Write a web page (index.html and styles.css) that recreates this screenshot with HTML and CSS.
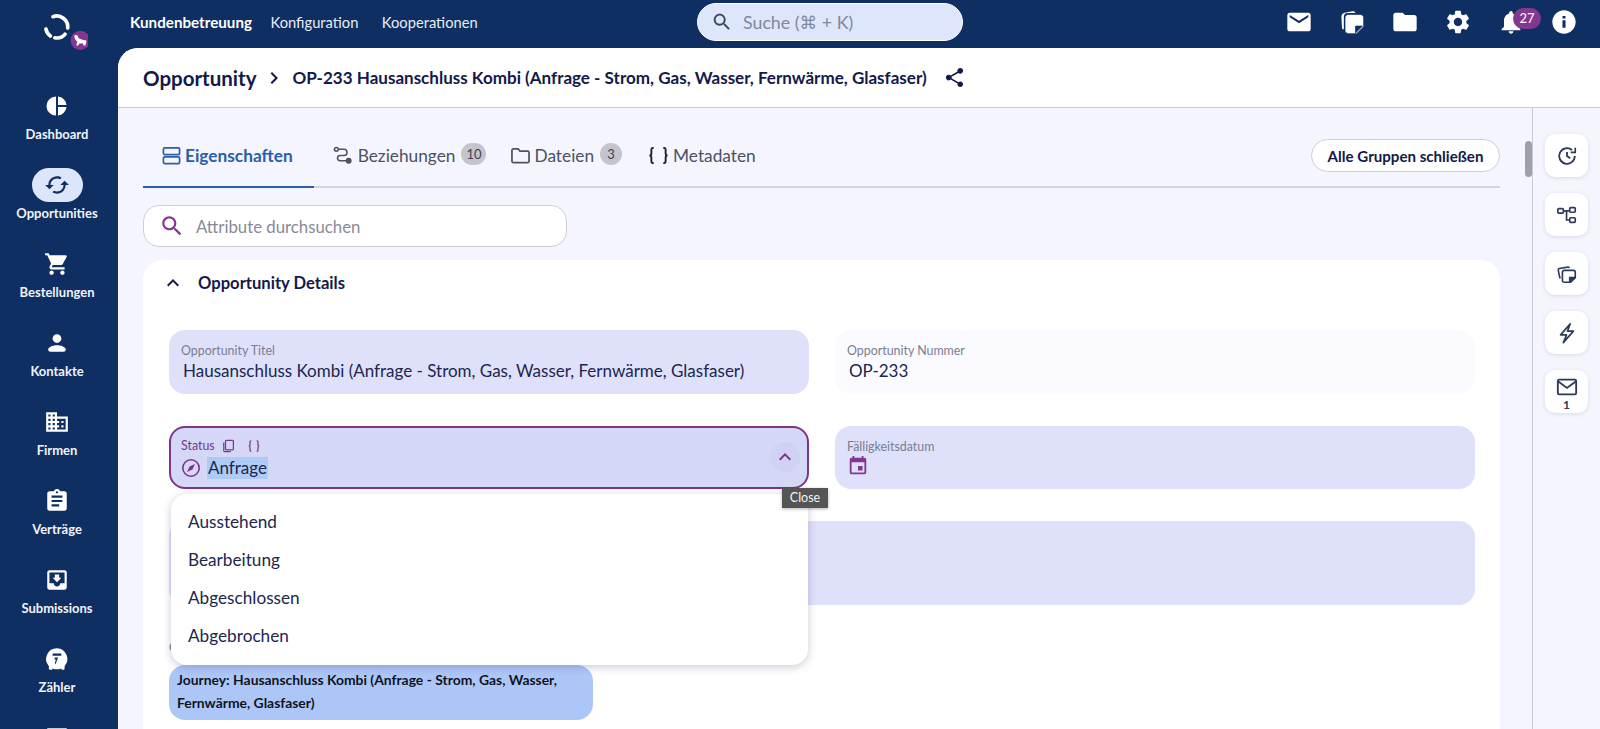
FILE: index.html
```html
<!DOCTYPE html>
<html lang="de">
<head>
  <meta charset="UTF-8" />
  <meta name="viewport" content="width=device-width, initial-scale=1.0"/>
  <title>Opportunity OP-233</title>
  <link rel="stylesheet" href="styles.css">
</head>
<body>
  <div class="app">
    <header class="topbar">
      <div class="logo-box">
        <svg class="logo" viewBox="0 0 60 50">
          <path d="M24.900 9.700A11 11 0 0 1 39.700 21" fill="none" stroke="#fff" stroke-width="3.600" stroke-linecap="round"/>
          <path d="M17.900 21.900A11 11 0 0 0 22.400 29" fill="none" stroke="#fff" stroke-width="3.600" stroke-linecap="round"/>
          <path d="M26.800 30.800A11 11 0 0 0 37.100 27.100" fill="none" stroke="#fff" stroke-width="3.600" stroke-linecap="round"/>
          <circle cx="52.300" cy="33.400" r="9.700" fill="#84378f"/>
          <path d="M46.300 28.400c2-1 4 0 4 2 1 2 5 2 8 3v2l-1 3h-2v-2h-4l-1 2h-2l1-4c-2-1-3-4-3-6z" fill="#fff"/>
        </svg>
      </div>
      <nav class="top-nav">
        <a class="top-link top-link-active">Kundenbetreuung</a>
        <a class="top-link">Konfiguration</a>
        <a class="top-link">Kooperationen</a>
      </nav>
      <div class="global-search">
        <svg class="icon-22" viewBox="0 0 24 24"><path d="M15.500 14h-.79l-.28-.27C15.410 12.590 16 11.110 16 9.500 16 5.910 13.090 3 9.500 3S3 5.910 3 9.500 5.910 16 9.500 16c1.610 0 3.090-.59 4.230-1.570l.27.28v.79l5 4.990L20.490 19l-4.990-5zm-6 0C7.010 14 5 11.990 5 9.500S7.010 5 9.500 5 14 7.010 14 9.500 11.990 14 9.500 14z"/></svg>
        <span>Suche (⌘ + K)</span>
      </div>
      <div class="top-icons">
        <svg class="top-icon" viewBox="0 0 24 24"><path d="M20 4H4c-1.100 0-2 .9-2 2v12c0 1.100.9 2 2 2h16c1.100 0 2-.9 2-2V6c0-1.100-.9-2-2-2zm0 4l-8 5-8-5V6l8 5 8-5v2z"/></svg>
        <svg class="top-icon" viewBox="0 0 24 24"><path d="M3 8.500C2.700 6 3.500 4.500 5.500 4l7-1.200c1.200-.2 2 .3 2.500 1.400H8.500C6 4.200 5 5.500 5 8v10.500c-1 0-1.500-.6-1.600-1.500z"/><path d="M9 5.500h10c1.700 0 3 1.300 3 3V16l-6 6H9c-1.700 0-3-1.300-3-3V8.500c0-1.700 1.300-3 3-3zm6 16l6-6h-6z" stroke="#0f2f63" stroke-width=".6"/></svg>
        <svg class="top-icon" viewBox="0 0 24 24"><path d="M10 4H4c-1.100 0-1.990.9-1.990 2L2 18c0 1.100.9 2 2 2h16c1.100 0 2-.9 2-2V8c0-1.100-.9-2-2-2h-8l-2-2z"/></svg>
        <svg class="top-icon" viewBox="0 0 24 24"><path d="M19.140 12.940c.04-.3.06-.61.06-.94 0-.32-.02-.64-.07-.94l2.030-1.580c.18-.14.23-.41.12-.61l-1.920-3.320c-.12-.22-.37-.29-.59-.22l-2.390.96c-.5-.38-1.030-.7-1.620-.94l-.36-2.540c-.04-.24-.24-.41-.48-.41h-3.840c-.24 0-.43.17-.47.41l-.36 2.540c-.59.24-1.130.57-1.620.94l-2.390-.96c-.22-.08-.47 0-.59.22L2.740 8.870c-.12.21-.08.47.12.61l2.030 1.580c-.05.3-.09.63-.09.94s.02.64.07.94l-2.030 1.580c-.18.14-.23.41-.12.61l1.920 3.320c.12.22.37.29.59.22l2.390-.96c.5.38 1.030.7 1.620.94l.36 2.540c.05.24.24.41.48.41h3.840c.24 0 .44-.17.47-.41l.36-2.540c.59-.24 1.130-.56 1.620-.94l2.390.96c.22.08.47 0 .59-.22l1.920-3.320c.12-.22.07-.47-.12-.61l-2.010-1.580zM12 15.600c-1.980 0-3.600-1.620-3.600-3.600s1.620-3.600 3.600-3.600 3.600 1.620 3.600 3.600-1.620 3.600-3.600 3.600z"/></svg>
        <div class="bell">
          <svg class="top-icon" viewBox="0 0 24 24"><path d="M12 22c1.100 0 2-.9 2-2h-4c0 1.100.89 2 2 2zm6-6v-5c0-3.070-1.640-5.640-4.500-6.320V4c0-.83-.67-1.500-1.500-1.500s-1.500.67-1.500 1.500v.68C7.630 5.360 6 7.920 6 11v5l-2 2v1h16v-1l-2-2z"/></svg>
          <span class="bell-badge">27</span>
        </div>
        <svg class="top-icon" viewBox="0 0 24 24"><path d="M12 2C6.480 2 2 6.480 2 12s4.480 10 10 10 10-4.480 10-10S17.520 2 12 2zm1.300 15h-2.600v-6.500h2.600V17zm0-8h-2.600V6.800h2.600V9z"/></svg>
      </div>
    </header>

    <div class="below">
      <aside class="sidebar">
        <a class="side-item">
          <span class="side-pill"><svg class="icon-24" viewBox="0 0 24 24"><path d="M11 2.500v19a9.500 9.500 0 0 1 0-19zM13 2.500a9.500 9.500 0 0 1 8.500 8.500H13zM13 13h8.500a9.500 9.500 0 0 1-8.500 8.500z"/></svg></span>
          <span class="side-label">Dashboard</span>
        </a>
        <a class="side-item side-item-active">
          <span class="side-pill"><svg class="icon-26" viewBox="0 0 24 24"><path transform="rotate(90 12 12)" d="M12 4V1L8 5l4 4V6c3.310 0 6 2.690 6 6 0 1.010-.25 1.970-.7 2.800l1.460 1.460C19.540 15.030 20 13.570 20 12c0-4.420-3.580-8-8-8zm0 14c-3.310 0-6-2.690-6-6 0-1.010.25-1.970.7-2.800L5.240 7.740C4.460 8.970 4 10.430 4 12c0 4.420 3.580 8 8 8v3l4-4-4-4v3z"/></svg></span>
          <span class="side-label">Opportunities</span>
        </a>
        <a class="side-item">
          <span class="side-pill"><svg class="icon-26" viewBox="0 0 24 24"><path d="M7 18c-1.100 0-1.990.9-1.990 2S5.900 22 7 22s2-.9 2-2-.9-2-2-2zM1 2v2h2l3.600 7.590-1.350 2.450c-.16.28-.25.61-.25.96 0 1.100.9 2 2 2h12v-2H7.420c-.14 0-.25-.11-.25-.25l.03-.12.9-1.630h7.450c.75 0 1.410-.41 1.750-1.030l3.580-6.490c.08-.14.12-.31.12-.48 0-.55-.45-1-1-1H5.210l-.94-2H1zm16 16c-1.100 0-1.990.9-1.990 2s.89 2 1.990 2 2-.9 2-2-.9-2-2-2z"/></svg></span>
          <span class="side-label">Bestellungen</span>
        </a>
        <a class="side-item">
          <span class="side-pill"><svg class="icon-24" viewBox="0 0 24 24"><path d="M12 12c2.210 0 4-1.790 4-4s-1.790-4-4-4-4 1.790-4 4 1.790 4 4 4zm0 2c-2.670 0-8 1.340-8 4c0 1 .6 2 2 2h12c1.400 0 2-1 2-2 0-2.660-5.330-4-8-4z" transform="translate(-1.200 -1.200) scale(1.100)"/></svg></span>
          <span class="side-label">Kontakte</span>
        </a>
        <a class="side-item">
          <span class="side-pill"><svg class="icon-26" viewBox="0 0 24 24"><path d="M12 7V3H2v18h20V7H12zM6 19H4v-2h2v2zm0-4H4v-2h2v2zm0-4H4V9h2v2zm0-4H4V5h2v2zm4 12H8v-2h2v2zm0-4H8v-2h2v2zm0-4H8V9h2v2zm0-4H8V5h2v2zm10 12h-8v-2h2v-2h-2v-2h2v-2h-2V9h8v10zm-2-8h-2v2h2v-2zm0 4h-2v2h2v-2z"/></svg></span>
          <span class="side-label">Firmen</span>
        </a>
        <a class="side-item">
          <span class="side-pill"><svg class="icon-26" viewBox="0 0 24 24"><path d="M19 3h-4.180C14.400 1.840 13.300 1 12 1c-1.300 0-2.400.84-2.820 2H5c-1.100 0-2 .9-2 2v14c0 1.100.9 2 2 2h14c1.100 0 2-.9 2-2V5c0-1.100-.9-2-2-2zm-7 0c.55 0 1 .45 1 1s-.45 1-1 1-1-.45-1-1 .45-1 1-1zm2 14H7v-2h7v2zm3-4H7v-2h10v2zm0-4H7V7h10v2z"/></svg></span>
          <span class="side-label">Verträge</span>
        </a>
        <a class="side-item">
          <span class="side-pill"><svg class="icon-26" viewBox="0 0 24 24"><path d="M19 3H5c-1.100 0-2 .9-2 2v14c0 1.100.9 2 2 2h14c1.100 0 2-.9 2-2V5c0-1.100-.9-2-2-2zm0 12h-4c0 1.660-1.350 3-3 3s-3-1.340-3-3H5V5h14v10zm-3-5h-2V7h-4v3H8l4 4 4-4z"/></svg></span>
          <span class="side-label">Submissions</span>
        </a>
        <a class="side-item">
          <span class="side-pill"><svg class="icon-26" viewBox="0 0 24 24"><path d="M12 2a10 10 0 0 0-7.500 16.600V21a1 1 0 0 0 1 1h1.500a1 1 0 0 0 1-1v-.3a10 10 0 0 0 8 0v.3a1 1 0 0 0 1 1h1a1 1 0 0 0 1-1v-2.400A10 10 0 0 0 12 2zM8 7h8v2H8zm5 3.500L10.500 17l-.5-1 1-3.500H9.500l.5-2z" fill-rule="evenodd"/></svg></span>
          <span class="side-label">Zähler</span>
        </a>
        <a class="side-item">
          <span class="side-pill"><svg class="icon-26" viewBox="0 0 24 24"><path d="M3 3h18v18H3z"/></svg></span>
        </a>
      </aside>

      <main class="panel">
        <div class="crumbs">
          <span class="crumb-root">Opportunity</span>
          <svg class="crumb-sep" viewBox="0 0 24 24"><path d="M10 6L8.590 7.410 13.170 12l-4.580 4.590L10 18l6-6z"/></svg>
          <span class="crumb-title">OP-233 Hausanschluss Kombi (Anfrage - Strom, Gas, Wasser, Fernwärme, Glasfaser)</span>
          <svg class="crumb-share" viewBox="0 0 24 24"><path d="M18 16.080c-.76 0-1.440.3-1.960.77L8.910 12.700c.05-.23.09-.46.09-.7s-.04-.47-.09-.7l7.050-4.110c.54.5 1.250.81 2.040.81 1.660 0 3-1.340 3-3s-1.340-3-3-3-3 1.340-3 3c0 .24.04.47.09.7L8.040 9.810C7.500 9.310 6.790 9 6 9c-1.660 0-3 1.340-3 3s1.340 3 3 3c.79 0 1.500-.31 2.040-.81l7.120 4.160c-.05.21-.08.43-.08.65 0 1.610 1.310 2.920 2.920 2.920 1.610 0 2.920-1.310 2.920-2.920s-1.310-2.920-2.920-2.920z"/></svg>
        </div>

        <div class="panel-body">
          <section class="content">
            <div class="scroll-thumb"></div>

            <div class="tabs">
              <a class="tab tab-active">
                <svg class="tab-icon" viewBox="0 0 20 20" stroke="currentColor" stroke-width="1.800"><rect x="1.500" y="2" width="17" height="7" rx="1.500"/><rect x="1.500" y="11.500" width="17" height="7" rx="1.500"/></svg>
                Eigenschaften
              </a>
              <a class="tab">
                <svg class="tab-icon" viewBox="0 0 20 20" stroke="currentColor" stroke-width="1.600"><circle cx="3.500" cy="3.500" r="2"/><path d="M5.500 3.500h6a3 3 0 0 1 0 6.500h-4a2.700 2.700 0 0 0 0 5.500h7"/><circle cx="16.500" cy="15.500" r="2.300" fill="currentColor"/></svg>
                Beziehungen
                <span class="tab-count">10</span>
              </a>
              <a class="tab">
                <svg class="tab-icon tab-icon-wide" viewBox="0 0 22 20" stroke="currentColor" stroke-width="1.800"><path d="M2 4.500c0-.8.700-1.500 1.500-1.500h5l2 2.500h8c.8 0 1.500.7 1.500 1.500v9c0 .8-.7 1.500-1.500 1.500h-15c-.8 0-1.500-.7-1.500-1.500z"/></svg>
                Dateien
                <span class="tab-count">3</span>
              </a>
              <a class="tab">
                <svg class="tab-icon tab-icon-wide" viewBox="0 0 22 20" stroke="#1c2230" stroke-width="2"><path d="M6 2H5C3.500 2 3.500 3 3.500 4.500v3C3.500 9 3 10 1.500 10 3 10 3.500 11 3.500 12.500v3C3.500 17 3.500 18 5 18h1M16 2h1c1.500 0 1.500 1 1.500 2.500v3c0 1.500.5 2.500 2 2.500-1.500 0-2 1-2 2.500v3c0 1.500 0 2.500-1.500 2.500h-1"/></svg>
                Metadaten
              </a>
              <button class="close-groups">Alle Gruppen schließen</button>
            </div>

            <div class="attr-search">
              <svg class="icon-26" viewBox="0 0 24 24"><path d="M15.500 14h-.79l-.28-.27C15.410 12.590 16 11.110 16 9.500 16 5.910 13.090 3 9.500 3S3 5.910 3 9.500 5.910 16 9.500 16c1.610 0 3.090-.59 4.230-1.570l.27.28v.79l5 4.990L20.490 19l-4.990-5zm-6 0C7.010 14 5 11.990 5 9.500S7.010 5 9.500 5 14 7.010 14 9.500 11.990 14 9.500 14z"/></svg>
              <span>Attribute durchsuchen</span>
            </div>

            <div class="group-card">
              <div class="group-head">
                <svg class="icon-24" viewBox="0 0 24 24"><path d="M12 8l-6 6 1.410 1.410L12 10.830l4.590 4.580L18 14z"/></svg>
                <span>Opportunity Details</span>
              </div>

              <div class="field-grid">
                <div class="field">
                  <div class="field-label">Opportunity Titel</div>
                  <div class="field-value">Hausanschluss Kombi (Anfrage - Strom, Gas, Wasser, Fernwärme, Glasfaser)</div>
                </div>
                <div class="field field-readonly">
                  <div class="field-label">Opportunity Nummer</div>
                  <div class="field-value">OP-233</div>
                </div>

                <div class="field field-status">
                  <div class="field-label">
                    Status
                    <svg class="label-icon" viewBox="0 0 16 16" stroke="currentColor" stroke-width="1.400"><rect x="4" y="1.500" width="9" height="11" rx="1"/><path d="M2 4v9.500c0 .6.400 1 1 1h7"/></svg>
                    <svg class="label-icon label-icon-braces" viewBox="0 0 16 16" stroke="currentColor" stroke-width="1.400"><path d="M5 2c-2 0-1.500 1.500-1.500 3S3.500 8 2 8c1.500 0 1.500 1.500 1.500 3S3 14 5 14M11 2c2 0 1.500 1.500 1.500 3s0 3 1.500 3c-1.500 0-1.500 1.500-1.500 3s.5 3-1.500 3"/></svg>
                  </div>
                  <div class="status-value">
                    <svg class="status-icon" viewBox="0 0 20 20"><circle cx="10" cy="10" r="8.200" fill="none" stroke="currentColor" stroke-width="1.600"/><path d="M14 6l-2.600 5.400L6 14l2.600-5.400z" fill="currentColor"/></svg>
                    <span class="selected-text">Anfrage</span>
                  </div>
                  <span class="status-toggle">
                    <svg class="icon-24" viewBox="0 0 24 24"><path d="M12 8l-6 6 1.410 1.410L12 10.830l4.590 4.580L18 14z"/></svg>
                  </span>
                </div>
                <div class="field field-date">
                  <div class="field-label">Fälligkeitsdatum</div>
                  <svg class="date-icon" viewBox="0 0 24 24"><path d="M17 12h-5v5h5v-5zM16 1v2H8V1H6v2H5c-1.110 0-1.990.9-1.990 2L3 19c0 1.100.89 2 2 2h14c1.100 0 2-.9 2-2V5c0-1.100-.9-2-2-2h-1V1h-2zm3 18H5V8h14v11z"/></svg>
                </div>

                <div class="field field-wide"></div>
              </div>

              <div class="journey-label">O</div>
              <div class="journey-chip">Journey: Hausanschluss Kombi (Anfrage - Strom, Gas, Wasser, Fernwärme, Glasfaser)</div>

              <ul class="status-menu">
                <li>Ausstehend</li>
                <li>Bearbeitung</li>
                <li>Abgeschlossen</li>
                <li>Abgebrochen</li>
              </ul>
              <div class="tooltip">Close</div>
            </div>
          </section>

          <aside class="rail">
            <a class="rail-btn"><svg class="rail-icon" viewBox="0 0 24 24" stroke="currentColor" stroke-width="2"><path d="M20.500 12a8.500 8.500 0 1 1-3-6.500"/><path d="M21 3v5h-5" stroke-width="1.800"/><path d="M12 7.500V12l3.500 2.500"/></svg></a>
            <a class="rail-btn"><svg class="rail-icon" viewBox="0 0 24 24" stroke="currentColor" stroke-width="1.800"><rect x="2" y="5" width="6" height="5" rx="1"/><rect x="15" y="4" width="6" height="5" rx="1"/><rect x="15" y="15" width="6" height="5" rx="1"/><path d="M8 7.500h7M11.500 7.500v10H15"/></svg></a>
            <a class="rail-btn"><svg class="rail-icon" viewBox="0 0 24 24" stroke="currentColor" stroke-width="1.800"><path d="M4.500 17C3.500 14 3 11 2.500 8c-.2-1 .3-1.800 1.300-2l8.700-1.500c1-.2 1.700.3 2 1"/><path d="M9 8h10c1.100 0 2 .9 2 2v6l-5 5H9c-1.100 0-2-.9-2-2v-9c0-1.100.9-2 2-2z"/><path d="M15 21v-5h6" fill="#2c3a55"/></svg></a>
            <a class="rail-btn"><svg class="rail-icon" viewBox="0 0 24 24" stroke="currentColor" stroke-width="1.800" stroke-linejoin="round"><path d="M15.500 2L5 14h6.500L8 22.500 19 10h-6.500z"/></svg></a>
            <a class="rail-btn rail-btn-mail">
              <svg class="rail-icon rail-icon-mail" viewBox="0 0 24 24" stroke="currentColor" stroke-width="2"><rect x="2" y="4" width="20" height="16" rx="1.500"/><path d="M2.500 6l9.500 7 9.500-7"/></svg>
              <span class="rail-count">1</span>
            </a>
          </aside>
        </div>
      </main>
    </div>
  </div>
</body>
</html>
```
FILE: styles.css
```css
* {
  box-sizing: border-box;
}
html, body {
  margin: 0;
  height: 100%;
  overflow: hidden;
}
body {
  font-family: Lato, "Open Sans", Arial, sans-serif;
  color: #13194a;
  background: #0f2f63;
}
svg {
  display: block;
  flex: none;
  fill: currentColor;
}
.icon-22 { width: 22px; height: 22px; }
.icon-24 { width: 24px; height: 24px; }
.icon-26 { width: 26px; height: 26px; }

.app {
  height: 729px;
  display: flex;
  flex-direction: column;
}

/* top bar */
.topbar {
  height: 48px;
  flex: none;
  display: flex;
  align-items: center;
  padding-bottom: 4px;
  color: #fff;
  background: #0f2f63;
  position: relative;
  z-index: 2;
}
.logo-box {
  width: 118px;
  height: 44px;
  flex: none;
}
.logo {
  width: 60px;
  height: 50px;
  margin: 7px 0 0 28px;
}
.top-nav {
  display: flex;
  gap: 23.5px;
  margin-left: 12px;
  width: 567px;
}
.top-link {
  font-size: 14.7px;
  color: #e8ecf5;
}
.top-link-active {
  font-size: 15.2px;
  font-weight: 700;
  color: #fff;
  margin-right: -5px;
}
.global-search {
  width: 266px;
  height: 38px;
  display: flex;
  align-items: center;
  gap: 10px;
  padding-left: 13px;
  background: #dde6fb;
  border: 1px solid #fff;
  border-radius: 19px;
  color: #3a4566;
  font-size: 17.8px;
}
.global-search span {
  color: #8088a0;
  font-family: Lato, "DejaVu Sans", sans-serif;
}
.top-icons {
  margin-left: auto;
  width: 315px;
  padding-right: 22px;
  display: flex;
  align-items: center;
  justify-content: space-between;
}
.top-icon {
  width: 28px;
  height: 28px;
}
.bell {
  position: relative;
}
.bell-badge {
  position: absolute;
  left: 16px;
  top: 0;
  width: 28px;
  height: 21px;
  border-radius: 11px;
  background: #84378f;
  font-size: 13px;
  line-height: 20px;
  text-align: center;
}

/* sidebar */
.below {
  flex: 1;
  min-height: 0;
  display: flex;
}
.sidebar {
  width: 118px;
  flex: none;
  padding: 41px 4px 0 0;
  color: #fff;
  overflow: hidden;
  background: #0f2f63;
}
.side-item {
  height: 79px;
  display: flex;
  flex-direction: column;
  align-items: center;
}
.side-pill {
  width: 51px;
  height: 34px;
  flex: none;
  border-radius: 17px;
  display: flex;
  align-items: center;
  justify-content: center;
}
.side-label {
  margin-top: 3px;
  font-size: 13px;
  line-height: 16px;
  font-weight: 700;
  color: #f0f3f9;
}
.side-item-active .side-pill {
  background: #dce6fb;
  color: #0f2f63;
}

/* main panel */
.panel {
  flex: 1;
  min-width: 0;
  display: flex;
  flex-direction: column;
  background: #f4f5fe;
  border-top-left-radius: 20px;
  overflow: hidden;
}
.crumbs {
  height: 60px;
  flex: none;
  display: flex;
  align-items: center;
  padding-left: 25px;
  background: #fff;
  border-bottom: 1px solid #c9cbd3;
}
.crumb-root {
  font-size: 20.5px;
  font-weight: 700;
}
.crumb-sep {
  width: 24px;
  height: 24px;
  margin: 0 7px 0 5px;
}
.crumb-title {
  font-size: 17.05px;
  font-weight: 700;
}
.crumb-share {
  width: 23px;
  height: 23px;
  margin-left: 16px;
}
.panel-body {
  flex: 1;
  min-height: 0;
  display: flex;
}
.content {
  flex: 1;
  min-width: 0;
  padding: 0 32px 0 25px;
  position: relative;
}
.scroll-thumb {
  position: absolute;
  right: 0;
  top: 33px;
  width: 7px;
  height: 36px;
  border-radius: 4px;
  background: #a0a1a8;
}

/* tabs */
.tabs {
  height: 80px;
  display: flex;
  align-items: stretch;
  border-bottom: 2px solid #d3d4dc;
}
.tab {
  display: flex;
  align-items: center;
  gap: 6px;
  font-size: 17.3px;
  color: #4d5160;
  padding: 16px 19px 0;
  margin-bottom: -2px;
  border-bottom: 2px solid transparent;
}
.tab:nth-child(2) { padding-right: 12px; }
.tab:nth-child(3) { padding-left: 12px; padding-right: 14px; }
.tab:nth-child(3) .tab-icon { margin-right: -3px; }
.tab:nth-child(4) { padding-left: 12px; }
.tab:nth-child(4) .tab-icon { margin-right: -2px; }
.tab-active {
  color: #2a5ea8;
  font-weight: 700;
  border-bottom-color: #2a5ea8;
  gap: 4px;
  padding-right: 21px;
}
.tab-icon {
  width: 19px;
  height: 19px;
  fill: none;
}
.tab-icon-wide {
  width: 21px;
}
.tab-count {
  min-width: 22px;
  height: 22px;
  margin-top: -3px;
  padding: 0 4px;
  border-radius: 11px;
  background: #c3c4cc;
  color: #3e4150;
  font-size: 13px;
  line-height: 22px;
  text-align: center;
}
.tab:nth-child(2) .tab-count {
  min-width: 25px;
}
.close-groups {
  margin: 31px 0 14px auto;
  width: 189px;
  font-family: inherit;
  font-size: 15.1px;
  font-weight: 700;
  color: #13194a;
  background: #fff;
  border: 1px solid #cdced8;
  border-radius: 17px;
  padding: 0;
}
.attr-search {
  width: 424px;
  height: 42px;
  margin-top: 17px;
  display: flex;
  align-items: center;
  gap: 11px;
  padding-left: 15px;
  background: #fff;
  border: 1px solid #cdced8;
  border-radius: 16px;
  color: #84378f;
  font-size: 16.8px;
}
.attr-search span {
  color: #878a97;
}

/* group card */
.group-card {
  margin-top: 13px;
  height: 520px;
  padding: 0 25px 0 26px;
  background: #fff;
  border-radius: 20px;
  position: relative;
}
.group-head {
  height: 46px;
  display: flex;
  align-items: center;
  gap: 13px;
  margin-left: -8px;
  font-size: 16.6px;
  font-weight: 700;
}
.field-grid {
  display: grid;
  grid-template-columns: 640px 640px;
  column-gap: 26px;
  row-gap: 32px;
  margin-top: 24px;
}
.field {
  height: 64px;
  padding: 13px 12px 0;
  background: #dfe1fa;
  border-radius: 16px;
}
.field-readonly {
  background: #fafaff;
}
.field-date {
  height: 63px;
}
.field-label {
  font-size: 12.4px;
  line-height: 16px;
  color: #7a7d92;
  display: flex;
  align-items: center;
  gap: 7px;
}
.field-value {
  margin: 1px 0 0 2px;
  font-size: 17px;
  line-height: 22px;
  color: #20264f;
}
.field-status {
  height: 63px;
  position: relative;
  padding: 10px 10px 0;
  background: #d4d7f6;
  border: 2px solid #7f3487;
  color: #7f3487;
}
.field-status .field-label {
  color: #7f3487;
}
.label-icon {
  width: 14px;
  height: 14px;
  fill: none;
}
.label-icon-braces {
  margin-left: 4px;
}
.status-value {
  margin-top: 3px;
  display: flex;
  align-items: center;
  gap: 6px;
  font-size: 17px;
  line-height: 22px;
}
.status-icon {
  width: 20px;
  height: 20px;
}
.selected-text {
  background: #aecbf5;
  color: #20264f;
  padding: 0 1px;
}
.status-toggle {
  position: absolute;
  right: 7px;
  top: 14px;
  width: 30px;
  height: 30px;
  border-radius: 50%;
  background: #cfd2f3;
  display: flex;
  align-items: center;
  justify-content: center;
}
.date-icon {
  width: 22px;
  height: 22px;
  margin-top: 0;
  color: #84378f;
}
.field-wide {
  grid-column: 1 / 3;
  height: 84px;
}
.journey-label {
  margin-top: 35px;
  font-size: 12.4px;
  line-height: 16px;
  color: #7a7d92;
}
.journey-chip {
  width: 424px;
  height: 55px;
  margin-top: 9px;
  padding: 3px 8px;
  background: #adc6f8;
  border-radius: 16px;
  font-size: 13.9px;
  line-height: 23px;
  font-weight: 700;
  color: #10131f;
}
.status-menu {
  position: absolute;
  left: 28px;
  top: 234px;
  width: 637px;
  height: 171px;
  margin: 0;
  padding: 9px 0;
  list-style: none;
  background: #fff;
  border-radius: 16px;
  box-shadow: 0 2px 8px rgba(40, 40, 90, 0.25);
}
.status-menu li {
  height: 38px;
  padding-left: 17px;
  font-size: 17.2px;
  line-height: 38px;
  color: #20264f;
}
.tooltip {
  position: absolute;
  left: 639px;
  top: 228px;
  width: 46px;
  height: 20px;
  background: #555;
  color: #f3f3f3;
  font-size: 12.5px;
  line-height: 20px;
  text-align: center;
  box-shadow: 0 1px 3px rgba(0, 0, 0, 0.3);
  z-index: 1;
}

/* right rail */
.rail {
  width: 68px;
  flex: none;
  padding: 26px 0 0 12px;
  border-left: 1px solid #c9cbd3;
  display: flex;
  flex-direction: column;
  gap: 16px;
}
.rail-btn {
  width: 43px;
  height: 43px;
  flex: none;
  background: #fff;
  border-radius: 10px;
  box-shadow: 0 1px 4px rgba(60, 60, 110, 0.14);
  color: #2c3a55;
  display: flex;
  flex-direction: column;
  align-items: center;
  justify-content: center;
}
.rail-icon {
  width: 22px;
  height: 22px;
  fill: none;
}
.rail-icon-mail {
  margin-top: 3px;
}
.rail-count {
  font-size: 12px;
  line-height: 13px;
  font-weight: 700;
}
```
